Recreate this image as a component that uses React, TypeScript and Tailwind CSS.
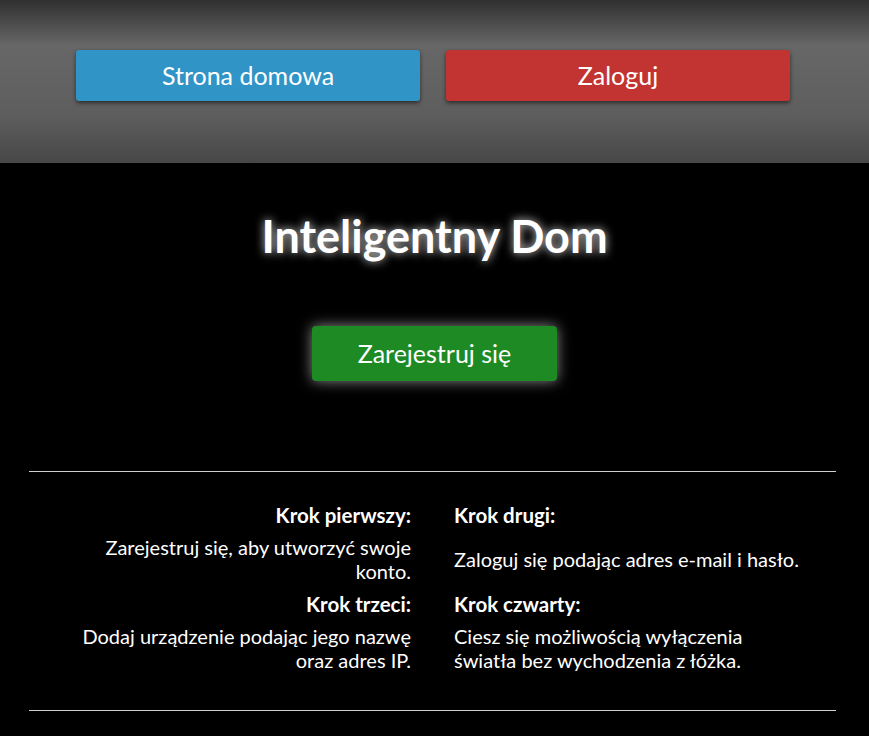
export default function App() {
  const steps = [
    {
      left: { title: "Krok pierwszy:", text: "Zarejestruj się, aby utworzyć swoje konto." },
      right: { title: "Krok drugi:", text: "Zaloguj się podając adres e-mail i hasło." },
    },
    {
      left: { title: "Krok trzeci:", text: "Dodaj urządzenie podając jego nazwę oraz adres IP." },
      right: { title: "Krok czwarty:", text: "Ciesz się możliwością wyłączenia światła bez wychodzenia z łóżka." },
    },
  ];

  return (
    <div className="min-h-screen bg-black text-white font-['Lato','Open_Sans',sans-serif]">
      {/* Header */}
      <div className="h-[163px] pr-[3px] flex items-center justify-center gap-[26px] bg-[linear-gradient(to_bottom,#303030_0%,#676767_28%,#5e5e5e_70%,#474747_100%)]">
        <button className="w-[344px] h-[51px] mb-[12px] rounded-[3px] bg-[#3194c6] text-[25px] text-white shadow-[0_2px_4px_rgba(0,0,0,0.55)]">
          Strona domowa
        </button>
        <button className="w-[344px] h-[51px] mb-[12px] rounded-[3px] bg-[#c23431] text-[25px] text-white shadow-[0_2px_4px_rgba(0,0,0,0.55)]">
          Zaloguj
        </button>
      </div>

      {/* Hero */}
      <div className="flex flex-col items-center pt-[45px]">
        <h1 className="text-[45px] font-bold leading-[56px] text-white [text-shadow:0_0_10px_rgba(255,255,255,0.85)]">
          Inteligentny Dom
        </h1>
        <button className="mt-[62px] w-[245px] h-[55px] rounded-[4px] bg-[#1e8a24] text-[25px] text-white shadow-[0_0_14px_rgba(255,255,255,0.55)]">
          Zarejestruj się
        </button>
      </div>

      {/* Steps */}
      <div className="ml-[29px] mr-[33px] mt-[90px] border-t border-[#d0d0d0]">
        <div className="grid grid-cols-[350px_350px] justify-center gap-x-[43px] items-center pt-[26px] pb-[34px]">
          {steps.map((row, i) => (
            <div key={i} className="contents">
              <div className="text-right text-[20.5px] font-bold leading-[26px] py-[4px]">{row.left.title}</div>
              <div className="text-[20.5px] font-bold leading-[26px] py-[4px]">{row.right.title}</div>
              <div className="text-right text-[20px] leading-[23.5px] py-[4px]">{row.left.text}</div>
              <div className="text-[20px] leading-[23.5px] py-[4px]">{row.right.text}</div>
            </div>
          ))}
        </div>
        <div className="border-t border-[#d0d0d0]" />
      </div>
    </div>
  );
}
